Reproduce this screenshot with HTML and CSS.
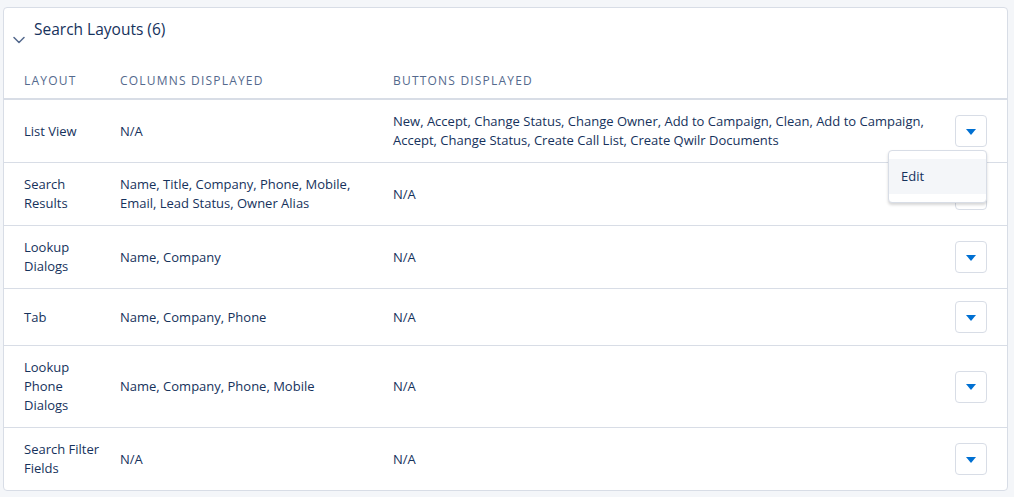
FILE: index.html
```html
<!DOCTYPE html>
<html>
<head>
  <meta name="viewport" content="width=device-width, initial-scale=1.0">
  <title>Search Layouts</title>
  <link rel="stylesheet" href="styles.css">
</head>
<body>
  <div class="card">
    <div class="card-header">
      <svg class="chevron" width="12" height="8" viewBox="0 0 12 8">
        <path d="M1 1.5 L6 6.5 L11 1.5" fill="none" stroke="#54698d" stroke-width="1.5" stroke-linecap="round" stroke-linejoin="round"/>
      </svg>
      <h2 class="card-title">Search Layouts (6)</h2>
    </div>

    <div class="row row-head">
      <div class="cell">Layout</div>
      <div class="cell">Columns Displayed</div>
      <div class="cell">Buttons Displayed</div>
      <div class="cell"></div>
    </div>

    <div class="row">
      <div class="cell">List View</div>
      <div class="cell">N/A</div>
      <div class="cell">New, Accept, Change Status, Change Owner, Add to Campaign, Clean, Add to Campaign, Accept, Change Status, Create Call List, Create Qwilr Documents</div>
      <div class="cell cell-action">
        <button class="menu-button"><span class="caret"></span></button>
        <div class="dropdown">
          <div class="dropdown-item">Edit</div>
        </div>
      </div>
    </div>

    <div class="row">
      <div class="cell">Search<br>Results</div>
      <div class="cell">Name, Title, Company, Phone, Mobile, Email, Lead Status, Owner Alias</div>
      <div class="cell">N/A</div>
      <div class="cell cell-action"><button class="menu-button"><span class="caret"></span></button></div>
    </div>

    <div class="row">
      <div class="cell">Lookup<br>Dialogs</div>
      <div class="cell">Name, Company</div>
      <div class="cell">N/A</div>
      <div class="cell cell-action"><button class="menu-button"><span class="caret"></span></button></div>
    </div>

    <div class="row">
      <div class="cell">Tab</div>
      <div class="cell">Name, Company, Phone</div>
      <div class="cell">N/A</div>
      <div class="cell cell-action"><button class="menu-button"><span class="caret"></span></button></div>
    </div>

    <div class="row">
      <div class="cell">Lookup<br>Phone<br>Dialogs</div>
      <div class="cell">Name, Company, Phone, Mobile</div>
      <div class="cell">N/A</div>
      <div class="cell cell-action"><button class="menu-button"><span class="caret"></span></button></div>
    </div>

    <div class="row row-last">
      <div class="cell">Search Filter<br>Fields</div>
      <div class="cell">N/A</div>
      <div class="cell">N/A</div>
      <div class="cell cell-action"><button class="menu-button"><span class="caret"></span></button></div>
    </div>
  </div>
</body>
</html>
```

FILE: styles.css
```css
body {
  margin: 0;
  padding: 7px 6px 0 3px;
  background-color: #f4f6f9;
  font-family: 'Open Sans', sans-serif;
  font-size: 13px;
  color: #16325c;
}
.card {
  background-color: #ffffff;
  border: 1px solid #d8dde6;
  border-radius: 4px;
}
.card-header {
  display: flex;
  align-items: flex-start;
  padding: 9px 0 0 9px;
}
.chevron {
  margin-top: 19px;
  margin-right: 9px;
}
.card-title {
  margin: 0;
  font-size: 15.5px;
  font-weight: normal;
  line-height: 24px;
  color: #16325c;
}
.row {
  display: grid;
  grid-template-columns: 96px 273px 554px 40px;
  padding: 0 20px;
  border-bottom: 1px solid #d8dde6;
  line-height: 19px;
}
.row .cell {
  padding: 12px 8px 12px 0;
  display: flex;
  align-items: center;
}
.row-head {
  border-bottom-width: 2px;
  font-size: 12px;
  letter-spacing: 0.1em;
  text-transform: uppercase;
  color: #54698d;
  line-height: 18px;
}
.row-head .cell {
  padding: 28px 0 8px;
}
.row-last {
  border-bottom: none;
}
.row .cell-action {
  position: relative;
  justify-content: flex-end;
  padding-right: 0;
}
.menu-button {
  width: 32px;
  height: 32px;
  padding: 0;
  background-color: #ffffff;
  border: 1px solid #d8dde6;
  border-radius: 4px;
  display: flex;
  align-items: center;
  justify-content: center;
}
.caret {
  width: 0;
  height: 0;
  border-left: 5px solid transparent;
  border-right: 5px solid transparent;
  border-top: 6px solid #0070d2;
  margin-top: 1px;
}
.dropdown {
  position: absolute;
  top: 50px;
  right: 0;
  width: 97px;
  padding: 8px 0;
  background-color: #ffffff;
  border: 1px solid #d8dde6;
  border-radius: 4px;
  box-shadow: 0 2px 3px rgba(0, 0, 0, 0.16);
  z-index: 2;
}
.dropdown-item {
  padding: 8px 12px;
  background-color: #f4f6f9;
  line-height: 19px;
}
```
